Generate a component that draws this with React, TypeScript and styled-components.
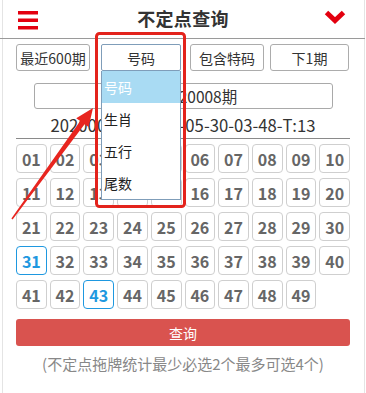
import React, { useState } from 'react';
import styled, { createGlobalStyle } from 'styled-components';

const GlobalStyle = createGlobalStyle`
  html, body {
    margin: 0;
    padding: 0;
    background: #fff;
  }
  body {
    font-family: "Noto Sans CJK SC", "Noto Sans", "Liberation Sans", sans-serif;
    color: #333;
  }
`;

const periods = ['最近600期', '号码', '包含特码', '下1期'];
const options = ['号码', '生肖', '五行', '尾数'];
const numbers = Array.from({ length: 49 }, (_, i) => String(i + 1).padStart(2, '0'));

const App: React.FC = () => {
  const [picked, setPicked] = useState<string[]>(['31', '43']);
  const [option, setOption] = useState('号码');

  const toggle = (n: string) => {
    setPicked(picked.includes(n) ? picked.filter((p) => p !== n) : [...picked, n]);
  };

  return (
    <Page>
      <GlobalStyle />
      <Header>
        <MenuIcon width="20" height="19" viewBox="0 0 20 19">
          <rect x="0" y="0" width="20" height="3.5" fill="#e3000f" />
          <rect x="0" y="7.5" width="20" height="3.5" fill="#e3000f" />
          <rect x="0" y="15" width="20" height="3.5" fill="#e3000f" />
        </MenuIcon>
        <Title>不定点查询</Title>
        <ChevronIcon width="22" height="14" viewBox="0 0 22 14">
          <path d="M2.5 2.5 L11 10.5 L19.5 2.5" fill="none" stroke="#e3000f" strokeWidth="5" strokeLinejoin="miter" />
        </ChevronIcon>
      </Header>

      <Content>
        <Toolbar>
          <ToolButton $w={74}>{periods[0]}</ToolButton>
          <SelectWrap $gap={11}>
            <SelectBox>{option}</SelectBox>
            <OptionList>
              {options.map((o) => (
                <OptionItem key={o} $active={o === option} onClick={() => setOption(o)}>
                  {o}
                </OptionItem>
              ))}
            </OptionList>
          </SelectWrap>
          <ToolButton $w={74} $gap={9}>{periods[2]}</ToolButton>
          <ToolButton $w={79} $gap={6}>{periods[3]}</ToolButton>
        </Toolbar>

        <IssueInput>2020年20008期</IssueInput>
        <InfoLine>2020008期:15-22-05-30-03-48-T:13</InfoLine>

        <NumberGrid>
          {numbers.map((n) => (
            <Ball key={n} $on={picked.includes(n)} onClick={() => toggle(n)}>
              {n}
            </Ball>
          ))}
        </NumberGrid>

        <QueryButton>查询</QueryButton>
        <Hint>(不定点拖牌统计最少必选2个最多可选4个)</Hint>
      </Content>

      <Annotation width="366" height="393" viewBox="0 0 366 393">
        <rect x="96.5" y="33.5" width="88" height="173" rx="3" fill="none" stroke="#e3231c" strokeWidth="3" />
        <polygon
          points="93,108 88.6,127 84.6,124.3 12.6,219.4 11.4,218.6 80.2,121 76.2,118.3"
          fill="#e8251f"
        />
      </Annotation>
    </Page>
  );
};

export default App;

const Page = styled.div`
  position: relative;
  box-sizing: border-box;
  width: 363px;
  min-height: 393px;
  margin-left: 2px;
  border-left: 1px solid #e4e4e4;
  border-right: 1px solid #e4e4e4;
`;

const Header = styled.div`
  display: flex;
  align-items: center;
  justify-content: space-between;
  height: 38px;
  padding: 0 19px 0 18px;
  border-bottom: 1px solid #9a9a9a;
  margin: 0 -1px 0 -3px;
`;

const MenuIcon = styled.svg`
  display: block;
  margin-top: 3px;
`;

const ChevronIcon = styled.svg`
  display: block;
  margin-top: -5px;
`;

const Title = styled.div`
  font-size: 18px;
  font-weight: bold;
  color: #333;
  letter-spacing: 0.3px;
  margin-left: 4px;
  margin-top: -3px;
`;

const Content = styled.div`
  padding: 0 14px 0 13px;
`;

const Toolbar = styled.div`
  display: flex;
  margin-top: 5px;
  height: 27px;
`;

const ToolButton = styled.div<{ $w: number; $gap?: number }>`
  box-sizing: border-box;
  width: ${(p) => p.$w}px;
  margin-left: ${(p) => p.$gap || 0}px;
  height: 27px;
  display: flex;
  align-items: center;
  justify-content: center;
  border: 1px solid #acacac;
  border-radius: 3px;
  font-size: 14px;
  color: #333;
  background: #fff;
`;

const SelectWrap = styled.div<{ $gap: number }>`
  position: relative;
  width: 80px;
  margin-left: ${(p) => p.$gap}px;
`;

const SelectBox = styled.div`
  box-sizing: border-box;
  height: 27px;
  display: flex;
  align-items: center;
  justify-content: center;
  border: 1px solid #7f9db9;
  border-radius: 2px;
  font-size: 14px;
  color: #333;
  background: #fff;
`;

const OptionList = styled.div`
  position: absolute;
  top: 27px;
  left: 0;
  z-index: 5;
  box-sizing: border-box;
  width: 80px;
  border: 1px solid #7f9db9;
  border-top: none;
  background: #fff;
`;

const OptionItem = styled.div<{ $active: boolean }>`
  height: 32px;
  line-height: 32px;
  padding-left: 2px;
  font-size: 14px;
  color: ${(p) => (p.$active ? '#fff' : '#222')};
  background: ${(p) => (p.$active ? '#a9dbf3' : '#fff')};
`;

const IssueInput = styled.div`
  box-sizing: border-box;
  width: 299px;
  height: 26px;
  margin: 12px auto 0;
  border: 1px solid #a9a9a9;
  border-radius: 3px;
  display: flex;
  align-items: center;
  justify-content: center;
  font-size: 15.5px;
  color: #333;
`;

const InfoLine = styled.div`
  margin-top: 4px;
  height: 24px;
  line-height: 24px;
  padding-bottom: 1px;
  border-bottom: 1px solid #8a8a8a;
  text-align: center;
  font-size: 16.7px;
  color: #333;
`;

const NumberGrid = styled.div`
  display: grid;
  grid-template-columns: repeat(10, 1fr);
  column-gap: 3px;
  row-gap: 5px;
  margin-top: 5px;
`;

const Ball = styled.div<{ $on: boolean }>`
  box-sizing: border-box;
  height: 29px;
  display: flex;
  align-items: center;
  justify-content: center;
  border: 1px solid ${(p) => (p.$on ? '#1e98e0' : '#cfcfcf')};
  border-radius: 4px;
  font-size: 16px;
  font-weight: bold;
  color: ${(p) => (p.$on ? '#1e98e0' : '#666')};
  cursor: pointer;
`;

const QueryButton = styled.div`
  margin-top: 10px;
  height: 27px;
  display: flex;
  align-items: center;
  justify-content: center;
  background: #d9534f;
  border-radius: 3px;
  color: #fff;
  font-size: 14px;
`;

const Hint = styled.div`
  margin-top: 6px;
  line-height: 24px;
  text-align: center;
  font-size: 15px;
  color: #888;
`;

const Annotation = styled.svg`
  position: absolute;
  top: 0;
  left: -3px;
  z-index: 10;
  pointer-events: none;
`;
